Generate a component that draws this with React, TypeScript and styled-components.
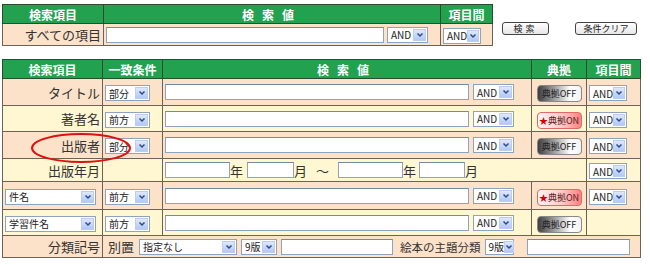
import styled, { createGlobalStyle } from "styled-components";

const GlobalStyle = createGlobalStyle`
  body {
    margin: 0;
    background: #fff;
    font-family: "Noto Sans CJK JP", sans-serif;
  }
`;

const Page = styled.div`
  position: relative;
  width: 650px;
  height: 265px;
  padding: 4px 0 0 2px;
  box-sizing: border-box;
`;

const TopRow = styled.div`
  display: flex;
  align-items: flex-start;
`;

const ButtonGroup = styled.div`
  display: flex;
  gap: 26px;
  margin: 18px 0 0 9px;
`;

const PlainButton = styled.span<{ $w: number }>`
  display: inline-flex;
  align-items: center;
  justify-content: center;
  width: ${(p) => p.$w}px;
  height: 13px;
  box-sizing: border-box;
  border: 1px solid #444;
  border-radius: 3px;
  background: linear-gradient(#ffffff, #e6e6e6);
  font-size: 9px;
  color: #222;
  letter-spacing: ${(p) => (p.$w < 55 ? "3px" : "0")};
`;

const Table = styled.table<{ $w: number }>`
  border-collapse: collapse;
  table-layout: fixed;
  width: ${(p) => p.$w}px;
  border: 1px solid #333;
`;

const BottomTable = styled(Table)`
  margin-top: 13px;
`;

const Th = styled.th<{ $spaced?: boolean }>`
  background: #22a24f;
  color: #fff;
  font-weight: bold;
  font-size: 12px;
  height: 18px;
  padding: 0;
  border: 1px solid #2c4a34;
  text-align: center;
  letter-spacing: ${(p) => (p.$spaced ? "8px" : "0")};
`;

const Tr = styled.tr<{ $tone: "peach" | "cream"; $h: number }>`
  height: ${(p) => p.$h}px;
  background: ${(p) => (p.$tone === "peach" ? "#fde2ca" : "#fff6d2")};
`;

const Td = styled.td<{ $right?: boolean; $center?: boolean }>`
  border: 1px solid #6e6256;
  padding: 0 2px;
  font-size: 13px;
  color: #333;
  white-space: nowrap;
  text-align: ${(p) => (p.$right ? "right" : p.$center ? "center" : "left")};
  vertical-align: middle;
`;

const Line = styled.div<{ $gap?: number }>`
  display: flex;
  align-items: center;
  gap: ${(p) => p.$gap ?? 4}px;
`;

const Label = styled.span<{ $size?: number }>`
  font-size: ${(p) => p.$size ?? 13}px;
  color: #333;
`;

const SelectBox = styled.span<{ $w: number }>`
  display: inline-flex;
  align-items: center;
  justify-content: space-between;
  width: ${(p) => p.$w}px;
  height: 16px;
  box-sizing: border-box;
  border: 1px solid #8ea3bf;
  background: #fff;
  padding: 0 1px 0 3px;
  font-size: 10px;
  color: #222;
  flex-shrink: 0;
`;

const SelectArrow = styled.span`
  display: flex;
  align-items: center;
  justify-content: center;
  width: 13px;
  height: 12px;
  background: linear-gradient(#dfe8fc, #b3c8f3);
  border: 1px solid #bccdef;
  box-sizing: border-box;
`;

const TextBox = styled.span<{ $w: number }>`
  display: inline-block;
  width: ${(p) => p.$w}px;
  height: 16px;
  box-sizing: border-box;
  border: 1px solid #8ea3bf;
  border-top-color: #7489a8;
  background: #fff;
  flex-shrink: 0;
`;

const Unit = styled.span<{ $w?: number; $center?: boolean }>`
  font-size: 13px;
  color: #333;
  width: ${(p) => (p.$w ? `${p.$w}px` : "auto")};
  text-align: ${(p) => (p.$center ? "center" : "left")};
`;

const AuthButton = styled.span<{ $on?: boolean }>`
  display: inline-flex;
  align-items: center;
  justify-content: center;
  width: 45px;
  height: 17px;
  box-sizing: border-box;
  border-radius: 4px;
  font-size: 9px;
  border: 1px solid ${(p) => (p.$on ? "#e06a6a" : "#888")};
  color: ${(p) => (p.$on ? "#552222" : "#222")};
  background: ${(p) =>
    p.$on
      ? "linear-gradient(to right, #fff4f4, #ffc9c9 55%, #ff7f7f)"
      : "linear-gradient(to right, #3e3e3e, #bdbdbd 50%, #ffffff 75%, #f3f3f3)"};
`;

const Star = styled.span`
  color: #d00000;
`;

const Circle = styled.svg`
  position: absolute;
  left: 30px;
  top: 132px;
  pointer-events: none;
`;

function Select({ w, text }: { w: number; text: string }) {
  return (
    <SelectBox $w={w}>
      <span>{text}</span>
      <SelectArrow>
        <svg width="8" height="6" viewBox="0 0 8 6">
          <path d="M1.5 1.5 L4 4 L6.5 1.5" stroke="#2a4b8c" strokeWidth="1.5" fill="none" />
        </svg>
      </SelectArrow>
    </SelectBox>
  );
}

function Auth({ on }: { on?: boolean }) {
  return on ? (
    <AuthButton $on>
      <Star>★</Star>典拠ON
    </AuthButton>
  ) : (
    <AuthButton>典拠OFF</AuthButton>
  );
}

type Row = {
  label?: string;
  labelSelect?: string;
  match?: string;
  auth?: "on" | "off";
  between?: boolean;
  tone: "peach" | "cream";
  h: number;
};

const rows: Row[] = [
  { label: "タイトル", match: "部分", auth: "off", between: true, tone: "peach", h: 27 },
  { label: "著者名", match: "前方", auth: "on", between: true, tone: "cream", h: 26 },
  { label: "出版者", match: "部分", auth: "off", between: true, tone: "peach", h: 27 },
  { labelSelect: "件名", match: "前方", auth: "on", between: true, tone: "peach", h: 28 },
  { labelSelect: "学習件名", match: "前方", auth: "off", between: false, tone: "cream", h: 26 },
];

function SearchRow({ r }: { r: Row }) {
  return (
    <Tr $tone={r.tone} $h={r.h}>
      <Td $right={!!r.label}>{r.label ? r.label : <Select w={91} text={r.labelSelect!} />}</Td>
      <Td>
        <Select w={45} text={r.match!} />
      </Td>
      <Td>
        <Line>
          <TextBox $w={304} />
          <Select w={41} text="AND" />
        </Line>
      </Td>
      <Td $center>{r.auth && <Auth on={r.auth === "on"} />}</Td>
      <Td>{r.between && <Select w={38} text="AND" />}</Td>
    </Tr>
  );
}

export default function App() {
  return (
    <>
      <GlobalStyle />
      <Page>
        <TopRow>
          <Table $w={490}>
            <colgroup>
              <col style={{ width: 101 }} />
              <col style={{ width: 337 }} />
              <col style={{ width: 52 }} />
            </colgroup>
            <thead>
              <tr>
                <Th>検索項目</Th>
                <Th $spaced>検索値</Th>
                <Th>項目間</Th>
              </tr>
            </thead>
            <tbody>
              <Tr $tone="peach" $h={22}>
                <Td $right>すべての項目</Td>
                <Td>
                  <Line $gap={3}>
                    <TextBox $w={278} />
                    <Select w={41} text="AND" />
                  </Line>
                </Td>
                <Td>
                  <Select w={38} text="AND" />
                </Td>
              </Tr>
            </tbody>
          </Table>
          <ButtonGroup>
            <PlainButton $w={47}>検索</PlainButton>
            <PlainButton $w={62}>条件クリア</PlainButton>
          </ButtonGroup>
        </TopRow>

        <BottomTable $w={638}>
          <colgroup>
            <col style={{ width: 100 }} />
            <col style={{ width: 60 }} />
            <col style={{ width: 369 }} />
            <col style={{ width: 55 }} />
            <col style={{ width: 54 }} />
          </colgroup>
          <thead>
            <tr>
              <Th>検索項目</Th>
              <Th>一致条件</Th>
              <Th $spaced>検索値</Th>
              <Th>典拠</Th>
              <Th>項目間</Th>
            </tr>
          </thead>
          <tbody>
            {rows.slice(0, 3).map((r) => (
              <SearchRow key={r.label} r={r} />
            ))}
            <Tr $tone="cream" $h={23}>
              <Td $right>出版年月</Td>
              <Td />
              <Td colSpan={2}>
                <Line $gap={0}>
                  <TextBox $w={65} />
                  <Unit $w={17}>年</Unit>
                  <TextBox $w={47} />
                  <Unit $w={13}>月</Unit>
                  <Unit $w={31} $center>～</Unit>
                  <TextBox $w={65} />
                  <Unit $w={16}>年</Unit>
                  <TextBox $w={46} />
                  <Unit>月</Unit>
                </Line>
              </Td>
              <Td>
                <Select w={38} text="AND" />
              </Td>
            </Tr>
            {rows.slice(3).map((r) => (
              <SearchRow key={r.labelSelect} r={r} />
            ))}
            <Tr $tone="peach" $h={22}>
              <Td $right>分類記号</Td>
              <Td colSpan={4}>
                <Line $gap={4}>
                  <Label style={{ marginLeft: 3, marginRight: 1 }}>別置</Label>
                  <Select w={98} text="指定なし" />
                  <Select w={36} text="9版" />
                  <TextBox $w={112} />
                  <Label $size={11.5} style={{ marginLeft: 3 }}>絵本の主題分類</Label>
                  <Select w={29} text="9版" />
                  <TextBox $w={103} style={{ marginLeft: 9 }} />
                </Line>
              </Td>
            </Tr>
          </tbody>
        </BottomTable>

        <Circle width="104" height="34" viewBox="0 0 104 34">
          <ellipse cx="51" cy="16" rx="49" ry="14" fill="none" stroke="#e01010" strokeWidth="2" />
        </Circle>
      </Page>
    </>
  );
}
